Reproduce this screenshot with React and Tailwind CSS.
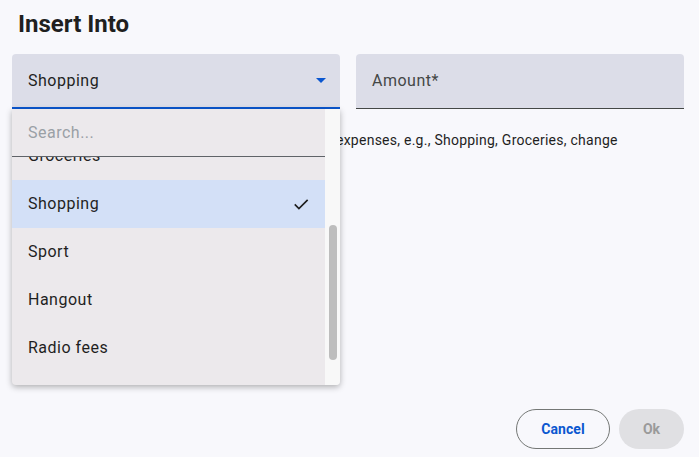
import React from "react";

const items = ["Groceries", "Shopping", "Sport", "Hangout", "Radio fees"];

function CheckIcon() {
  return (
    <svg width="20" height="20" viewBox="0 0 24 24" fill="none">
      <path d="M4.5 12.5l5 5L20 7" stroke="#1f1f1f" strokeWidth="2" />
    </svg>
  );
}

export default function App() {
  return (
    <div className="w-[699px] h-[457px] bg-[#f8f8fc] relative overflow-hidden" style={{ fontFamily: "Roboto, 'Liberation Sans', sans-serif" }}>
      <div className="px-3 pt-[8px]">
        <h1 className="pl-[6px] text-[24px] leading-[32px] font-bold text-[#1f1f1f]">Insert Into</h1>

        <div className="flex gap-4 mt-[14px]">
          <div className="w-[328px] h-[55px] bg-[#dcdde8] rounded-t-[4px] border-b-2 border-[#0b57d0] flex items-center justify-between pl-4 pr-[14px]">
            <span className="text-base tracking-[0.5px] text-[#1f1f1f]">Shopping</span>
            <span className="w-0 h-0 border-l-[5px] border-r-[5px] border-t-[5px] border-l-transparent border-r-transparent border-t-[#0b57d0]" />
          </div>
          <div className="w-[328px] h-[55px] bg-[#dcdde8] rounded-t-[4px] border-b border-[#444746] flex items-center pl-4">
            <span className="text-base tracking-[0.5px] text-[#444746]">Amount*</span>
          </div>
        </div>

        <p className="mt-[21px] pl-[6px] text-sm tracking-[0.25px] text-[#1f1f1f] whitespace-nowrap">
          <span className="inline-block w-[318px]">Categorize your</span>expenses, e.g., Shopping, Groceries, change
        </p>
      </div>

      <div className="absolute left-[12px] top-[109px] w-[328px] h-[276px] bg-[#ece9ec] shadow-[0_2px_6px_rgba(0,0,0,0.3)] flex rounded-b-[4px] overflow-hidden">
        <div className="flex-1 relative overflow-hidden">
          <div className="h-[48px] border-b border-[#5f6368] flex items-center pl-4 bg-[#ece9ec] relative z-10">
            <span className="text-base tracking-[0.5px] text-[#9aa0a6]">Search...</span>
          </div>
          <div className="-mt-[25px]">
            {items.map((it) => (
              <div
                key={it}
                className={`h-[48px] flex items-center justify-between pl-4 pr-[14px] text-base tracking-[0.5px] text-[#1f1f1f] ${it === "Shopping" ? "bg-[#d3e0f7]" : ""}`}
              >
                <span>{it}</span>
                {it === "Shopping" && <CheckIcon />}
              </div>
            ))}
          </div>
        </div>
        <div className="w-[15px] bg-[#f8f8f8] relative">
          <div className="absolute left-[4px] top-[116px] w-[8px] h-[135px] rounded-full bg-[#bdbdbd]" />
        </div>
      </div>

      <div className="absolute right-[15px] bottom-[8px] flex gap-[9px]">
        <button className="w-[94px] h-[40px] rounded-full border border-[#747775] text-sm font-bold tracking-[0.1px] text-[#0b57d0]">Cancel</button>
        <button className="w-[65px] h-[40px] rounded-full bg-[#e0e0e3] text-sm font-bold text-[#9a9a9a]">Ok</button>
      </div>
    </div>
  );
}
